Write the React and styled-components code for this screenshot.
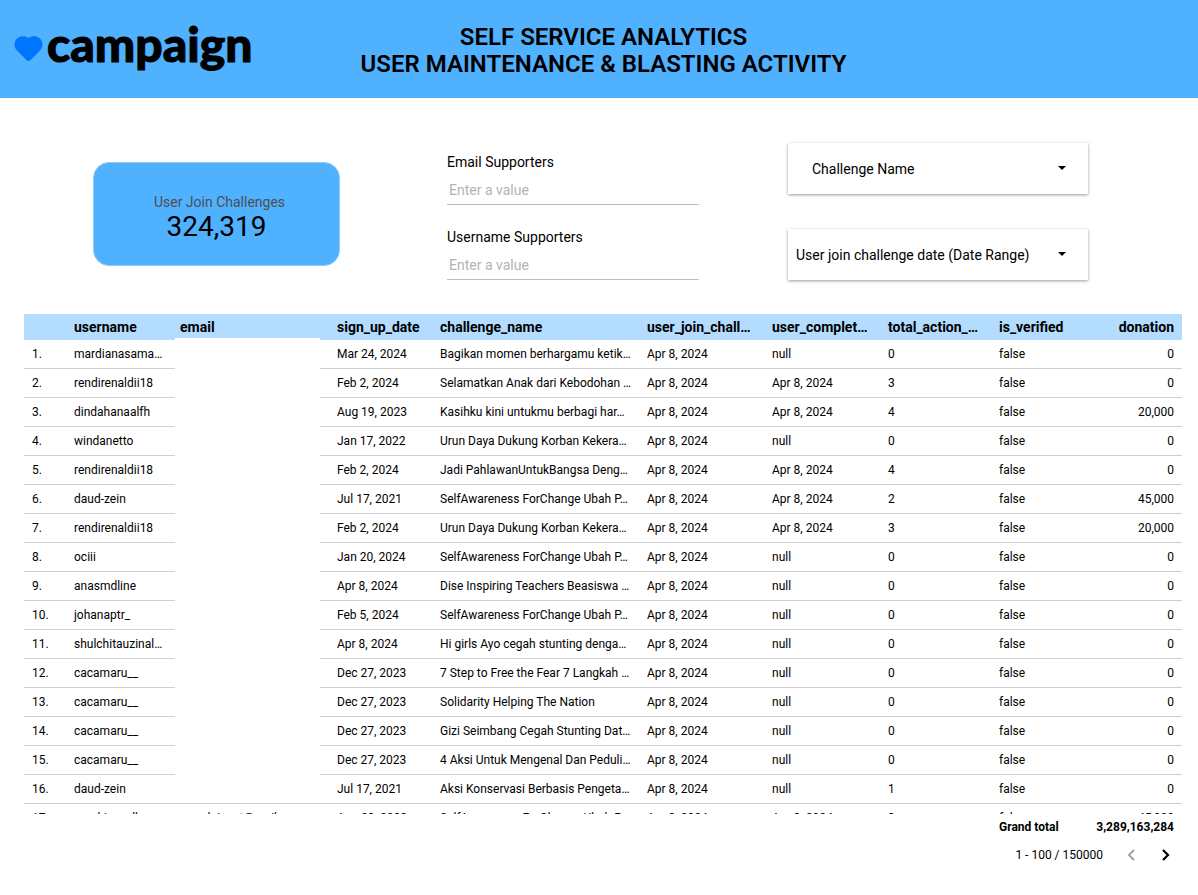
import React from "react";
import styled, { createGlobalStyle } from "styled-components";

const GlobalStyle = createGlobalStyle`
  * { box-sizing: border-box; }
  body {
    margin: 0;
    background: #ffffff;
    color: #000000;
    font-family: Roboto, "Liberation Sans", sans-serif;
  }
  button, input, select { font-family: inherit; }
`;

const Header = styled.header`
  display: grid;
  grid-template-columns: 1fr auto 1fr;
  align-items: center;
  min-height: 98px;
  padding: 0 5px 0 14px;
  background: #50b1ff;
`;

const Logo = styled.a`
  display: flex;
  align-items: center;
  gap: 4px;
  color: #000000;
  text-decoration: none;
`;

const LogoText = styled.span`
  padding-bottom: 10px;
  font-family: Lato, sans-serif;
  font-size: 48px;
  line-height: 56px;
  font-weight: 900;
  -webkit-text-stroke: 1px #000000;
  stroke-linejoin: round;
`;

const Title = styled.h1`
  margin: 0;
  padding-top: 4px;
  font-size: 24px;
  line-height: 27px;
  font-weight: 600;
  text-align: center;
`;

const Summary = styled.section`
  display: grid;
  grid-template-columns: 354fr 341fr 300fr;
  align-items: start;
  padding: 45px 110px 34px 93px;
`;

const ScoreArea = styled.div`
  padding: 19px 107px 0 0;
`;

const ScoreCard = styled.div`
  display: flex;
  flex-direction: column;
  align-items: center;
  justify-content: center;
  min-height: 104px;
  padding-top: 8px;
  border: 1px solid #8fc9f7;
  border-radius: 16px;
  background: #50b1ff;
`;

const ScoreLabel = styled.span`
  padding-left: 6px;
  font-size: 14px;
  line-height: 18px;
  color: #4b4f54;
`;

const ScoreValue = styled.strong`
  font-size: 28px;
  line-height: 32px;
  font-weight: 400;
`;

const Fields = styled.div`
  display: flex;
  flex-direction: column;
  gap: 22px;
  padding: 9px 89px 0 0;
`;

const Field = styled.div`
  display: flex;
  flex-direction: column;
`;

const FieldLabel = styled.label`
  font-size: 14px;
  line-height: 20px;
`;

const TextInput = styled.input`
  width: 100%;
  height: 33px;
  padding: 4px 2px 0;
  border: 0;
  border-bottom: 1px solid #bdbdbd;
  background: transparent;
  font-size: 14px;
  &::placeholder { color: #b3b3b3; opacity: 1; }
`;

const Selects = styled.div`
  display: flex;
  flex-direction: column;
  gap: 35px;
`;

const SelectBox = styled.div`
  position: relative;
  background: #ffffff;
  box-shadow: 0 1px 3px rgba(0, 0, 0, 0.4);
`;

const Select = styled.select`
  display: block;
  width: 100%;
  height: 51px;
  padding: 0 40px 0 ${(p) => p.$inset}px;
  border: 0;
  background: transparent;
  color: #000000;
  font-size: 14px;
  appearance: none;
`;

const Caret = styled.svg`
  position: absolute;
  right: 22px;
  top: 23px;
  pointer-events: none;
`;

const Report = styled.main`
  padding: 0 16px 24px 24px;
`;

const TableViewport = styled.div`
  position: relative;
  height: 500px;
  overflow: hidden;
`;

const Table = styled.table`
  width: 100%;
  table-layout: fixed;
  border-collapse: separate;
  border-spacing: 0;
`;

const Col = styled.col`
  width: ${(p) => p.$width}px;
`;

const HeadCell = styled.th`
  height: 26px;
  padding: 0 ${(p) => (p.$numeric ? 8 : 2)}px 0 8px;
  background: #b3dcff;
  font-size: 14px;
  line-height: 16px;
  font-weight: 700;
  text-align: ${(p) => (p.$numeric ? "right" : "left")};
  white-space: nowrap;
  overflow: hidden;
  text-overflow: ellipsis;
`;

const Cell = styled.td`
  height: 29px;
  padding: 0 ${(p) => (p.$numeric ? 8 : 2)}px 0 8px;
  border-bottom: 1px solid #cfcfcf;
  font-size: 12px;
  line-height: 16px;
  text-align: ${(p) => (p.$numeric ? "right" : "left")};
  white-space: nowrap;
  overflow: hidden;
  text-overflow: ellipsis;
`;

const TotalCell = styled.td`
  height: 26px;
  padding: 0 8px;
  font-size: 12px;
  line-height: 16px;
  font-weight: 700;
  text-align: ${(p) => (p.$numeric ? "right" : "left")};
  white-space: nowrap;
`;

const EmailMask = styled.div`
  position: absolute;
  top: 24px;
  bottom: 12px;
  left: 13%;
  width: 145px;
  background: #ffffff;
`;

const Pager = styled.nav`
  display: flex;
  align-items: center;
  justify-content: flex-end;
  height: 30px;
  padding-right: 4px;
  font-size: 12px;
`;

const PageRange = styled.span`
  margin-right: 16px;
`;

const PageButton = styled.button`
  display: flex;
  align-items: center;
  justify-content: center;
  width: 24px;
  height: 24px;
  margin-left: ${(p) => (p.$next ? 11 : 0)}px;
  padding: 0;
  border: 0;
  background: transparent;
  color: ${(p) => (p.disabled ? "#9e9e9e" : "#000000")};
`;

const columns = [
  { name: "", width: 42 },
  { name: "username", width: 106 },
  { name: "email", width: 157 },
  { name: "sign_up_date", width: 103 },
  { name: "challenge_name", width: 207 },
  { name: "user_join_chall…", width: 125 },
  { name: "user_complet…", width: 116 },
  { name: "total_action_…", width: 111 },
  { name: "is_verified", width: 92 },
  { name: "donation", width: 99, numeric: true },
];

const JOINED = "Apr 8, 2024";

const rows = [
  ["mardianasama…", "", "Mar 24, 2024", "Bagikan momen berhargamu ketik…", "null", "0", "0"],
  ["rendirenaldii18", "", "Feb 2, 2024", "Selamatkan Anak dari Kebodohan …", JOINED, "3", "0"],
  ["dindahanaalfh", "", "Aug 19, 2023", "Kasihku kini untukmu berbagi har…", JOINED, "4", "20,000"],
  ["windanetto", "", "Jan 17, 2022", "Urun Daya Dukung Korban Kekera…", "null", "0", "0"],
  ["rendirenaldii18", "", "Feb 2, 2024", "Jadi PahlawanUntukBangsa Deng…", JOINED, "4", "0"],
  ["daud-zein", "", "Jul 17, 2021", "SelfAwareness ForChange Ubah P…", JOINED, "2", "45,000"],
  ["rendirenaldii18", "", "Feb 2, 2024", "Urun Daya Dukung Korban Kekera…", JOINED, "3", "20,000"],
  ["ociii", "", "Jan 20, 2024", "SelfAwareness ForChange Ubah P…", "null", "0", "0"],
  ["anasmdline", "", "Apr 8, 2024", "Dise Inspiring Teachers Beasiswa …", "null", "0", "0"],
  ["johanaptr_", "", "Feb 5, 2024", "SelfAwareness ForChange Ubah P…", "null", "0", "0"],
  ["shulchitauzinal…", "", "Apr 8, 2024", "Hi girls Ayo cegah stunting denga…", "null", "0", "0"],
  ["cacamaru__", "", "Dec 27, 2023", "7 Step to Free the Fear 7 Langkah …", "null", "0", "0"],
  ["cacamaru__", "", "Dec 27, 2023", "Solidarity Helping The Nation", "null", "0", "0"],
  ["cacamaru__", "", "Dec 27, 2023", "Gizi Seimbang Cegah Stunting Dat…", "null", "0", "0"],
  ["cacamaru__", "", "Dec 27, 2023", "4 Aksi Untuk Mengenal Dan Peduli…", "null", "0", "0"],
  ["daud-zein", "", "Jul 17, 2021", "Aksi Konservasi Berbasis Pengeta…", "null", "1", "0"],
  ["muchiezenll", "ramaloinsat@mail", "Aug 29, 2023", "SelfAwareness ForChange Ubah P…", JOINED, "3", "45,000"],
];

function ColumnWidths() {
  return (
    <colgroup>
      {columns.map((c) => (
        <Col key={c.name} $width={c.width} />
      ))}
    </colgroup>
  );
}

function FilterField({ id, label }) {
  return (
    <Field>
      <FieldLabel htmlFor={id}>{label}</FieldLabel>
      <TextInput id={id} type="text" placeholder="Enter a value" />
    </Field>
  );
}

function FilterSelect({ label, inset }) {
  return (
    <SelectBox>
      <Select aria-label={label} $inset={inset}>
        <option>{label}</option>
      </Select>
      <Caret width="8" height="4" viewBox="0 0 8 4" aria-hidden="true">
        <path d="M0 0h8L4 4z" fill="#000000" />
      </Caret>
    </SelectBox>
  );
}

export default function App() {
  return (
    <>
      <GlobalStyle />
      <Header>
        <Logo href="#">
          <svg width="29" height="26" viewBox="0 0 29 26" aria-hidden="true">
            <path
              d="M14.5 2C11.6-.1 6.400-.4 3.100 2.500C-.4 5.800-.2 11.200 2.800 14.300L12.400 24.100Q14.500 26 16.600 24.100L26.200 14.300C29.200 11.200 29.400 5.800 25.900 2.500C22.600-.4 17.400-.1 14.500 2Z"
              fill="#0076ff"
            />
          </svg>
          <LogoText>campaign</LogoText>
        </Logo>
        <Title>
          SELF SERVICE ANALYTICS
          <br />
          USER MAINTENANCE &amp; BLASTING ACTIVITY
        </Title>
      </Header>

      <Summary>
        <ScoreArea>
          <ScoreCard>
            <ScoreLabel>User Join Challenges</ScoreLabel>
            <ScoreValue>324,319</ScoreValue>
          </ScoreCard>
        </ScoreArea>
        <Fields>
          <FilterField id="email-filter" label="Email Supporters" />
          <FilterField id="username-filter" label="Username Supporters" />
        </Fields>
        <Selects>
          <FilterSelect label="Challenge Name" inset={24} />
          <FilterSelect label="User join challenge date (Date Range)" inset={8} />
        </Selects>
      </Summary>

      <Report>
        <TableViewport>
          <Table>
            <ColumnWidths />
            <thead>
              <tr>
                {columns.map((c) => (
                  <HeadCell key={c.name} scope="col" $numeric={c.numeric}>
                    {c.name}
                  </HeadCell>
                ))}
              </tr>
            </thead>
            <tbody>
              {rows.map(([user, email, signUp, challenge, completed, actions, donation], i) => (
                <tr key={i}>
                  <Cell>{i + 1}.</Cell>
                  <Cell>{user}</Cell>
                  <Cell>{email}</Cell>
                  <Cell>{signUp}</Cell>
                  <Cell>{challenge}</Cell>
                  <Cell>{JOINED}</Cell>
                  <Cell>{completed}</Cell>
                  <Cell>{actions}</Cell>
                  <Cell>false</Cell>
                  <Cell $numeric>{donation}</Cell>
                </tr>
              ))}
            </tbody>
          </Table>
          <EmailMask />
        </TableViewport>
        <Table>
          <ColumnWidths />
          <tbody>
            <tr>
              <TotalCell colSpan={8} />
              <TotalCell>Grand total</TotalCell>
              <TotalCell $numeric>3,289,163,284</TotalCell>
            </tr>
          </tbody>
        </Table>
        <Pager aria-label="Pages">
          <PageRange>1 - 100 / 150000</PageRange>
          <PageButton type="button" aria-label="Previous page" disabled>
            <svg width="8" height="12" viewBox="0 0 8 12" aria-hidden="true">
              <path d="M7 1L2 6l5 5" fill="none" stroke="currentColor" strokeWidth="1.8" />
            </svg>
          </PageButton>
          <PageButton type="button" aria-label="Next page" $next>
            <svg width="8" height="12" viewBox="0 0 8 12" aria-hidden="true">
              <path d="M1 1l5 5-5 5" fill="none" stroke="currentColor" strokeWidth="2.2" />
            </svg>
          </PageButton>
        </Pager>
      </Report>
    </>
  );
}
